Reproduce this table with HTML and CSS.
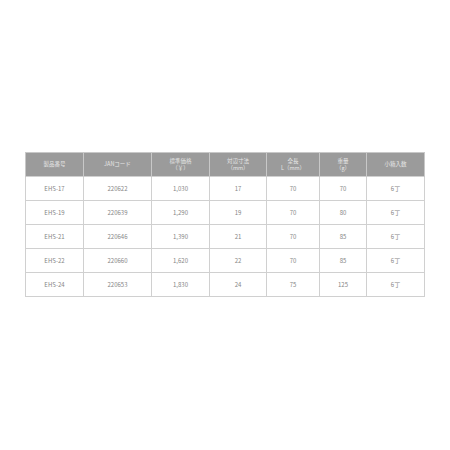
FILE: index.html
```html
<!DOCTYPE html>
<html lang="ja">
<head>
<meta charset="utf-8">
<link rel="stylesheet" href="styles.css">
</head>
<body>
<div class="page">
<table class="spec">
<colgroup>
<col class="c1"><col class="c2"><col class="c3"><col class="c4"><col class="c5"><col class="c6"><col class="c7">
</colgroup>
<thead>
<tr><th>製品番号</th><th>JANコード</th><th>標準価格<br>（￥）</th><th>対辺寸法<br>（mm）</th><th>全長<br>L（mm）</th><th>重量<br>（g）</th><th>小箱入数</th></tr>
</thead>
<tbody>
<tr><td>EHS-17</td><td>220622</td><td>1,030</td><td>17</td><td>70</td><td>70</td><td>6丁</td></tr>
<tr><td>EHS-19</td><td>220639</td><td>1,290</td><td>19</td><td>70</td><td>80</td><td>6丁</td></tr>
<tr><td>EHS-21</td><td>220646</td><td>1,390</td><td>21</td><td>70</td><td>85</td><td>6丁</td></tr>
<tr><td>EHS-22</td><td>220660</td><td>1,620</td><td>22</td><td>70</td><td>85</td><td>6丁</td></tr>
<tr><td>EHS-24</td><td>220653</td><td>1,830</td><td>24</td><td>75</td><td>125</td><td>6丁</td></tr>
</tbody>
</table>
</div>
</body>
</html>
```
FILE: styles.css
```css
html, body {
  margin: 0;
  padding: 0;
  background: #ffffff;
}
.page {
  width: 450px;
  height: 450px;
  display: flex;
  align-items: center;
  justify-content: center;
  font-family: "Noto Sans CJK JP", "Noto Sans", sans-serif;
}
.spec {
  border-collapse: collapse;
  table-layout: fixed;
  width: 399px;
  margin-top: -1px;
}
.c1 { width: 58px; }
.c2 { width: 68px; }
.c3 { width: 58px; }
.c4 { width: 57px; }
.c5 { width: 53px; }
.c6 { width: 47px; }
.c7 { width: 58px; }
.spec th {
  background: #9b9b9b;
  color: #e6e6e6;
  font-weight: normal;
  font-size: 5.5px;
  line-height: 6.5px;
  height: 23px;
  padding: 0;
  text-align: center;
  vertical-align: middle;
  border-left: 1px solid #c8c8c8;
  border-right: 1px solid #c8c8c8;
  border-top: 1px solid #c8c8c8;
}
.spec td {
  color: #858585;
  font-size: 6px;
  height: 23px;
  padding: 0;
  text-align: center;
  vertical-align: middle;
  border: 1px solid #d0d0d0;
}
```
